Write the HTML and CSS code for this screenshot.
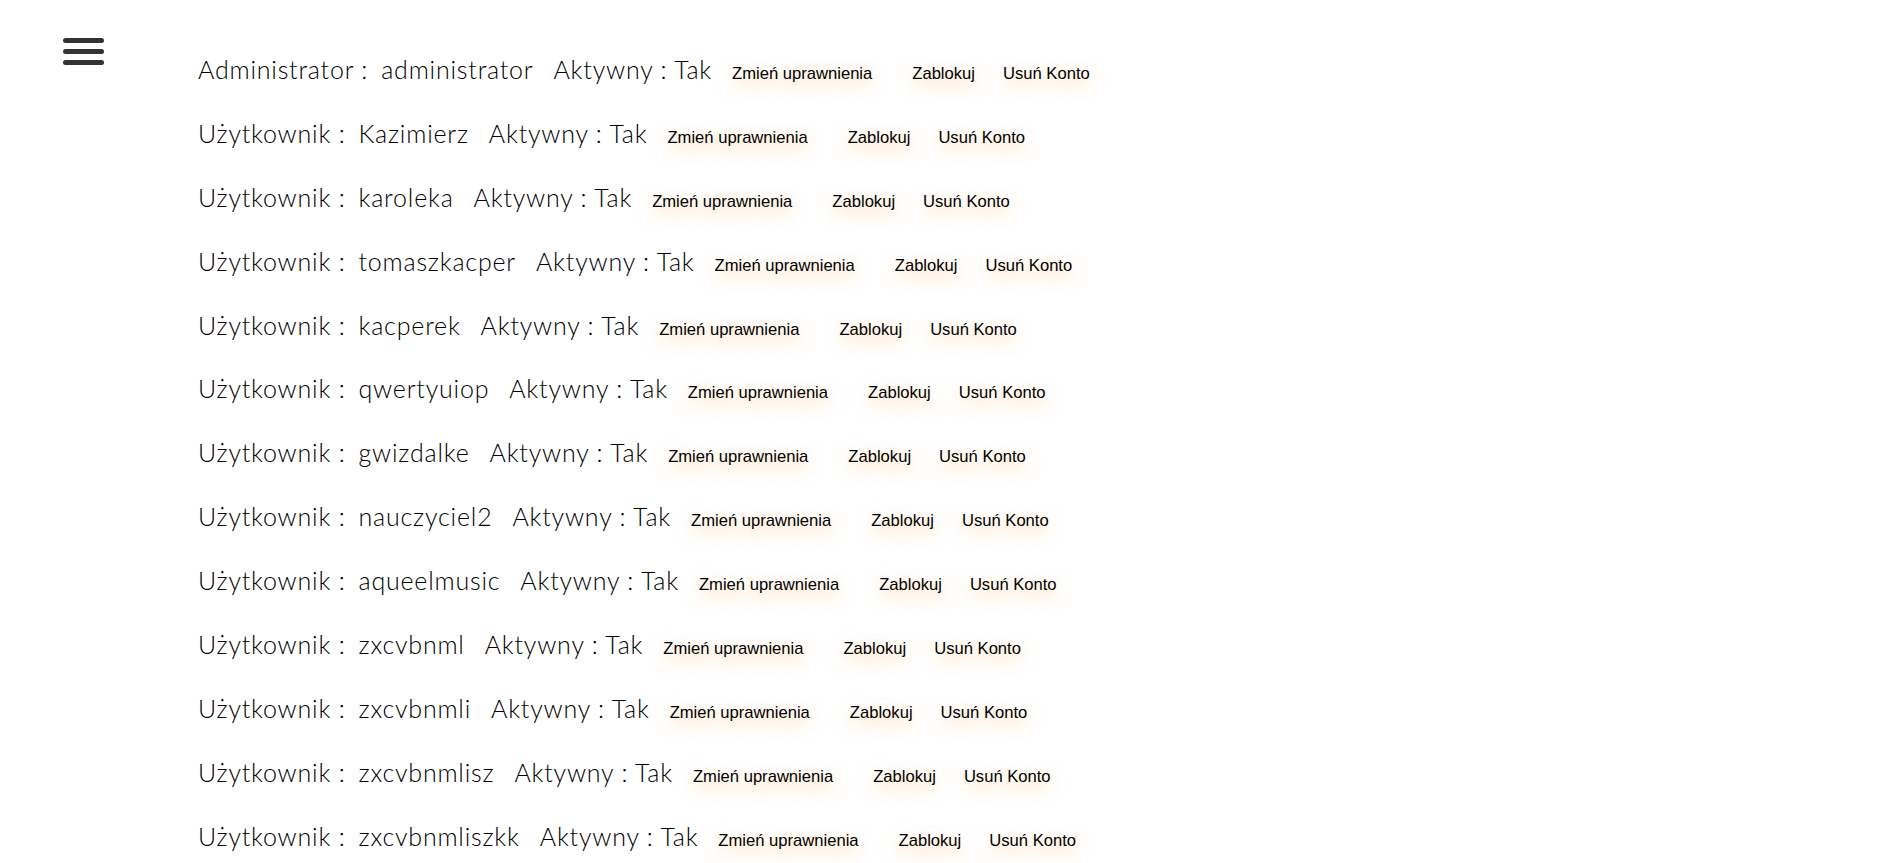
FILE: index.html
```html
<!DOCTYPE html>
<html lang="pl">
<head>
<meta charset="utf-8">
<title>Użytkownicy</title>
<link rel="stylesheet" href="styles.css">
</head>
<body>
<div class="page">
  <button class="menu-btn" aria-label="Menu">
    <span class="bar"></span><span class="bar"></span><span class="bar"></span>
  </button>
  <main class="users">
    <div class="row"><span class="label">Administrator :</span><span class="name">administrator</span><span class="status">Aktywny : Tak</span><button class="act act-perm">Zmień uprawnienia</button><button class="act act-block">Zablokuj</button><button class="act">Usuń Konto</button></div>
    <div class="row"><span class="label">Użytkownik :</span><span class="name">Kazimierz</span><span class="status">Aktywny : Tak</span><button class="act act-perm">Zmień uprawnienia</button><button class="act act-block">Zablokuj</button><button class="act">Usuń Konto</button></div>
    <div class="row"><span class="label">Użytkownik :</span><span class="name">karoleka</span><span class="status">Aktywny : Tak</span><button class="act act-perm">Zmień uprawnienia</button><button class="act act-block">Zablokuj</button><button class="act">Usuń Konto</button></div>
    <div class="row"><span class="label">Użytkownik :</span><span class="name">tomaszkacper</span><span class="status">Aktywny : Tak</span><button class="act act-perm">Zmień uprawnienia</button><button class="act act-block">Zablokuj</button><button class="act">Usuń Konto</button></div>
    <div class="row"><span class="label">Użytkownik :</span><span class="name">kacperek</span><span class="status">Aktywny : Tak</span><button class="act act-perm">Zmień uprawnienia</button><button class="act act-block">Zablokuj</button><button class="act">Usuń Konto</button></div>
    <div class="row"><span class="label">Użytkownik :</span><span class="name">qwertyuiop</span><span class="status">Aktywny : Tak</span><button class="act act-perm">Zmień uprawnienia</button><button class="act act-block">Zablokuj</button><button class="act">Usuń Konto</button></div>
    <div class="row"><span class="label">Użytkownik :</span><span class="name">gwizdalke</span><span class="status">Aktywny : Tak</span><button class="act act-perm">Zmień uprawnienia</button><button class="act act-block">Zablokuj</button><button class="act">Usuń Konto</button></div>
    <div class="row"><span class="label">Użytkownik :</span><span class="name">nauczyciel2</span><span class="status">Aktywny : Tak</span><button class="act act-perm">Zmień uprawnienia</button><button class="act act-block">Zablokuj</button><button class="act">Usuń Konto</button></div>
    <div class="row"><span class="label">Użytkownik :</span><span class="name">aqueelmusic</span><span class="status">Aktywny : Tak</span><button class="act act-perm">Zmień uprawnienia</button><button class="act act-block">Zablokuj</button><button class="act">Usuń Konto</button></div>
    <div class="row"><span class="label">Użytkownik :</span><span class="name">zxcvbnml</span><span class="status">Aktywny : Tak</span><button class="act act-perm">Zmień uprawnienia</button><button class="act act-block">Zablokuj</button><button class="act">Usuń Konto</button></div>
    <div class="row"><span class="label">Użytkownik :</span><span class="name">zxcvbnmli</span><span class="status">Aktywny : Tak</span><button class="act act-perm">Zmień uprawnienia</button><button class="act act-block">Zablokuj</button><button class="act">Usuń Konto</button></div>
    <div class="row"><span class="label">Użytkownik :</span><span class="name">zxcvbnmlisz</span><span class="status">Aktywny : Tak</span><button class="act act-perm">Zmień uprawnienia</button><button class="act act-block">Zablokuj</button><button class="act">Usuń Konto</button></div>
    <div class="row"><span class="label">Użytkownik :</span><span class="name">zxcvbnmliszkk</span><span class="status">Aktywny : Tak</span><button class="act act-perm">Zmień uprawnienia</button><button class="act act-block">Zablokuj</button><button class="act">Usuń Konto</button></div>
  </main>
</div>
</body>
</html>
```
FILE: styles.css
```css
html, body {
  margin: 0;
  padding: 0;
  background: #fff;
}

.page {
  display: flex;
  align-items: flex-start;
  font-family: "Lato", "Noto Sans", sans-serif;
  font-weight: 300;
  color: #000;
}

.menu-btn {
  display: flex;
  flex-direction: column;
  gap: 6px;
  margin: 38px 0 0 63px;
  padding: 0;
  border: 0;
  background: none;
  width: 41px;
  cursor: pointer;
}

.bar {
  display: block;
  width: 41px;
  height: 5px;
  border-radius: 3px;
  background: #333;
}

.users {
  margin-left: 94px;
  padding-top: 57px;
  display: flex;
  flex-direction: column;
}

.row {
  display: flex;
  align-items: baseline;
  height: 63.9px;
  font-size: 25px;
  line-height: 25px;
  letter-spacing: 0.8px;
  white-space: nowrap;
}

.label {
  margin-right: 13px;
}

.name {
  margin-right: 20px;
}

.status {
  margin-right: 20px;
}

.act {
  font-family: "Liberation Sans", Arial, sans-serif;
  font-size: 16.6px;
  font-weight: 400;
  letter-spacing: 0;
  color: #000;
  background: none;
  border: 0;
  padding: 0;
  margin: 0 28px 0 0;
  text-shadow: 0 5px 16px rgba(255, 170, 60, 0.6);
  cursor: pointer;
}

.act-perm {
  margin-right: 40px;
}
```
